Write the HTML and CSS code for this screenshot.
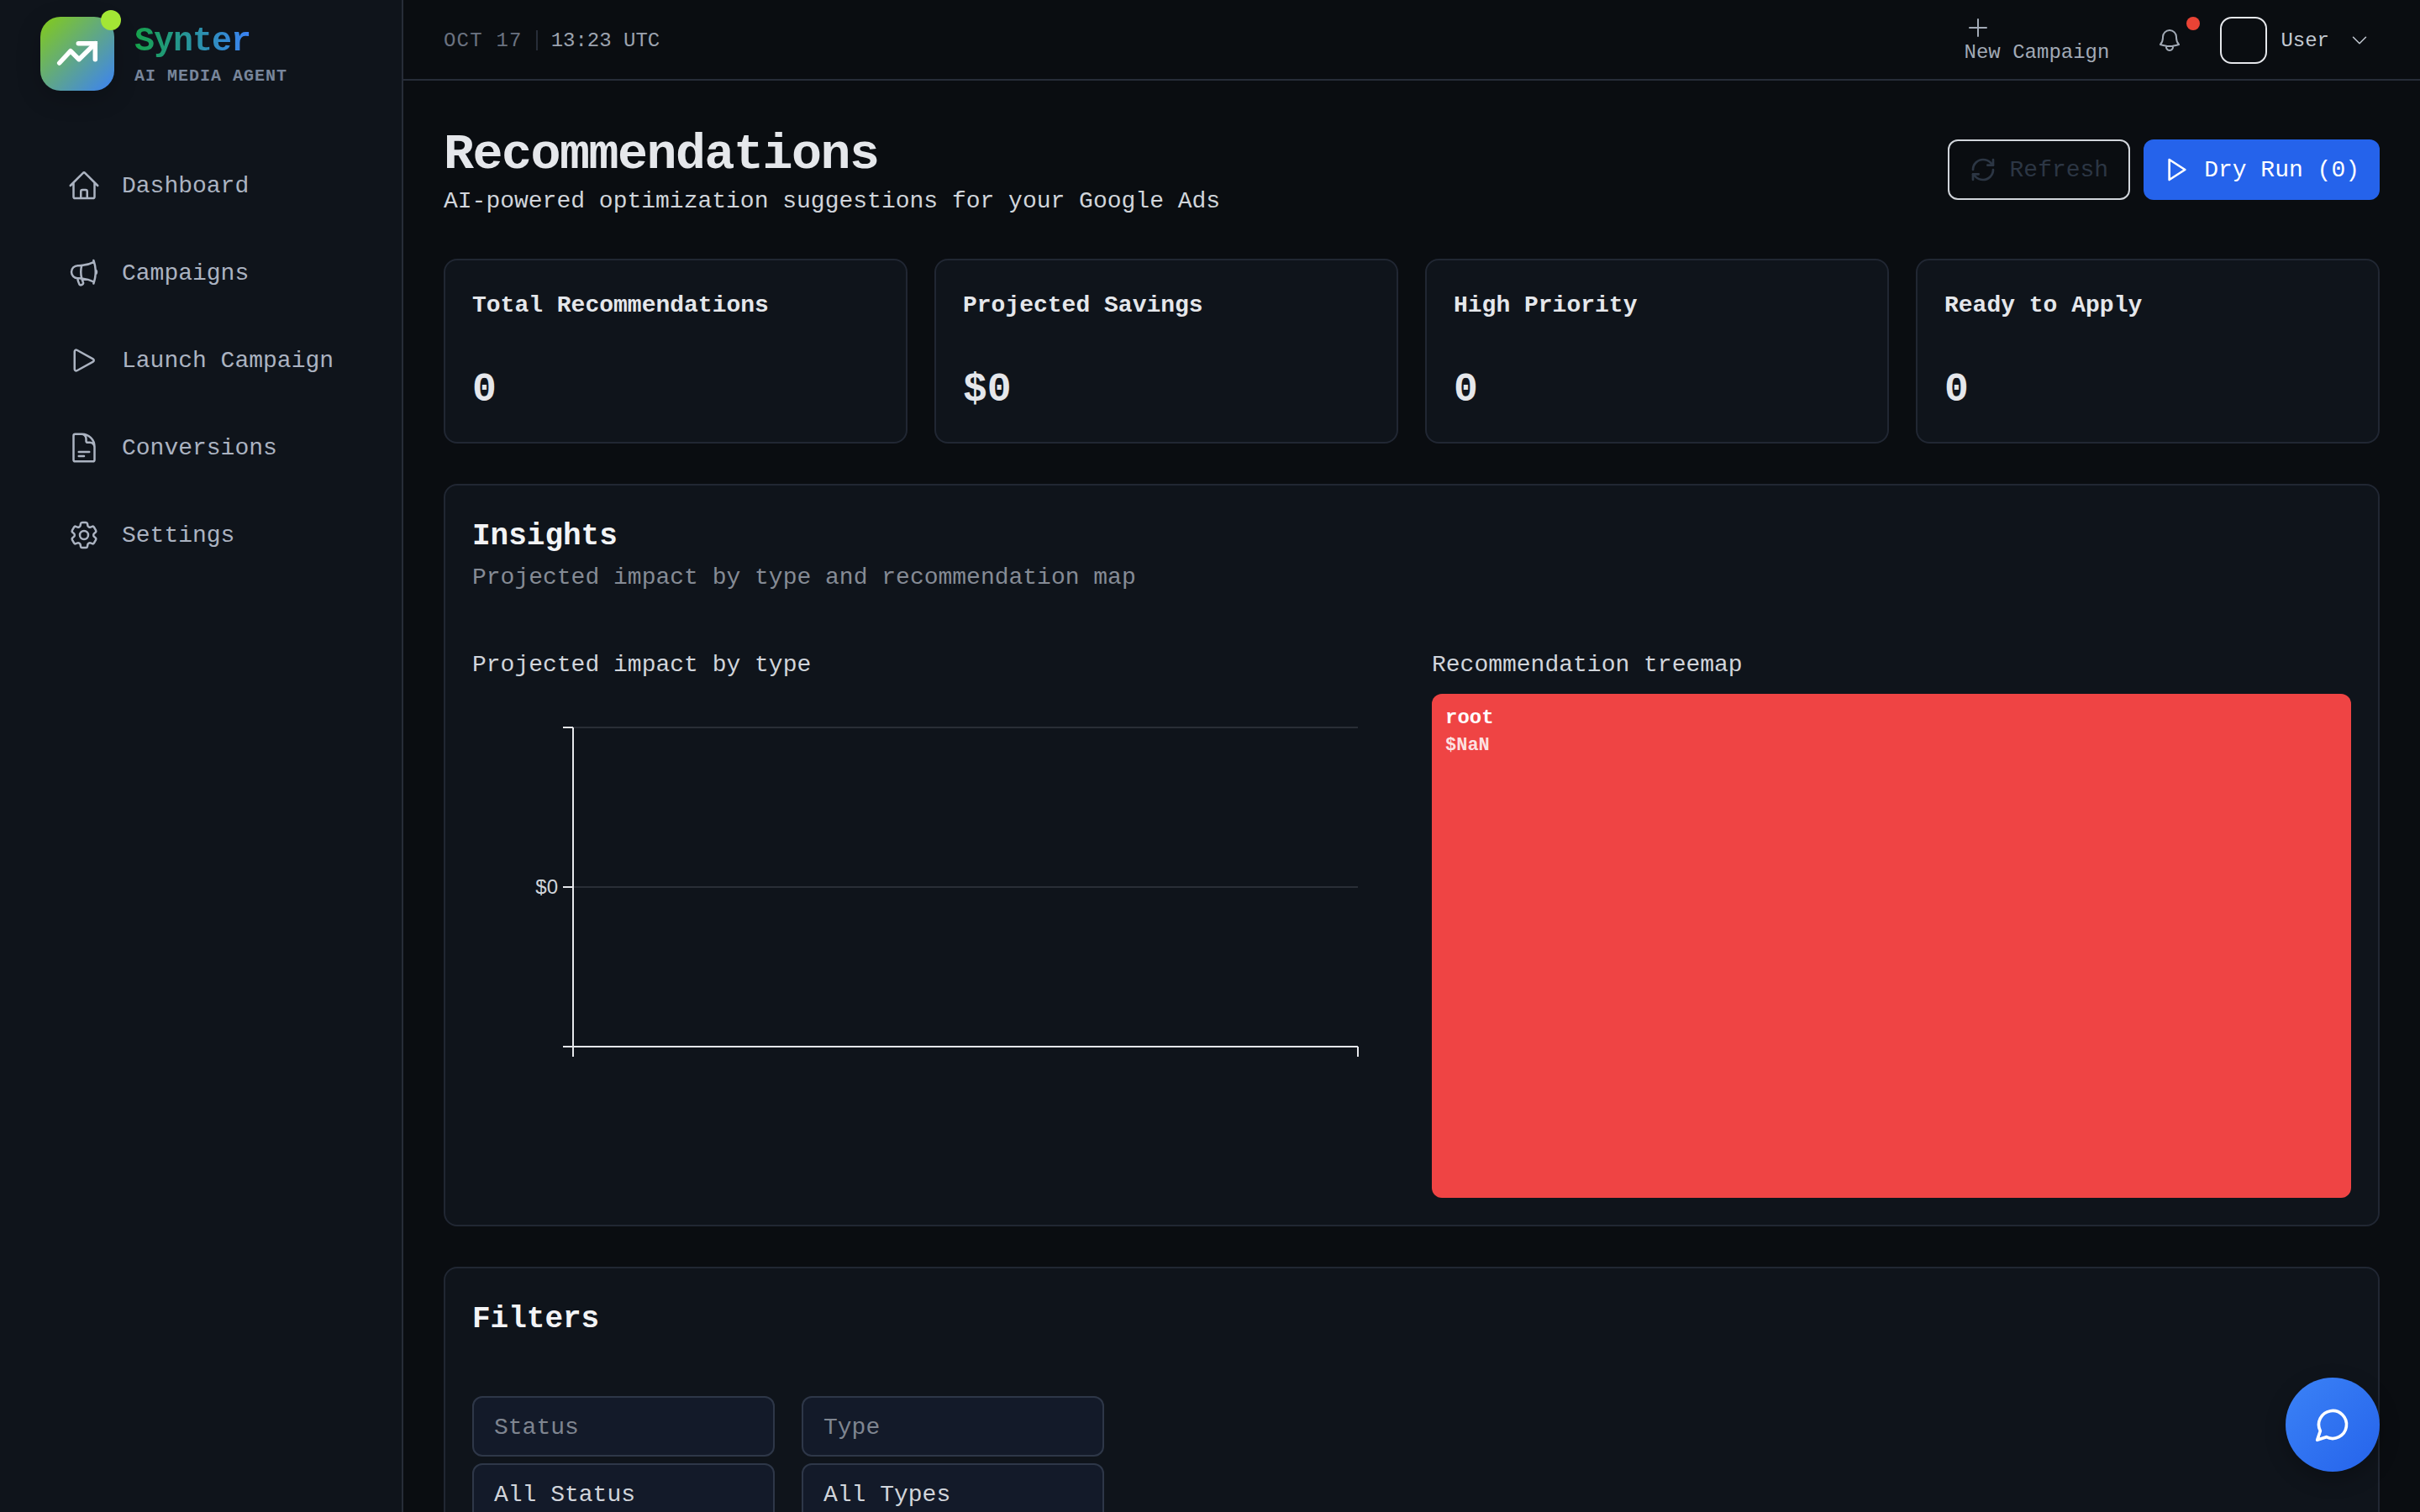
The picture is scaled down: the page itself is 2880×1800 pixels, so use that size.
FILE: index.html
```html
<!DOCTYPE html>
<html lang="en">
<head>
    <meta charset="UTF-8">
    <title>Synter - Recommendations</title>
    <link rel="stylesheet" href="styles.css">
</head>
<body>
    <aside class="sidebar">
        <div class="brand">
            <div class="brand-logo">
                <svg class="brand-arrow" viewBox="0 0 50 50"><path d="M3.7 36 17 21.7l10 10L46.3 12.7"/><path class="brand-arrow-head" d="M26.3 12.7h20v19"/></svg>
                <span class="brand-dot"></span>
            </div>
            <div class="brand-text">
                <div class="brand-name">Synter</div>
                <div class="brand-sub">AI MEDIA AGENT</div>
            </div>
        </div>
        <nav class="nav">
            <a class="nav-item">
                <svg class="nav-icon" viewBox="0 0 24 24"><path d="m2.25 12 8.954-8.955c.44-.439 1.152-.439 1.591 0L21.75 12M4.5 9.75v10.125c0 .621.504 1.125 1.125 1.125H9.75v-4.875c0-.621.504-1.125 1.125-1.125h2.25c.621 0 1.125.504 1.125 1.125V21h4.125c.621 0 1.125-.504 1.125-1.125V9.75M8.25 21h8.25"/></svg>
                Dashboard
            </a>
            <a class="nav-item">
                <svg class="nav-icon" viewBox="0 0 24 24"><path d="M10.34 15.84c-.688-.06-1.386-.09-2.09-.09H7.5a4.5 4.5 0 1 1 0-9h.75c.704 0 1.402-.03 2.09-.09m0 9.18c.253.962.584 1.892.985 2.783.247.55.06 1.21-.463 1.511l-.657.38c-.551.318-1.26.117-1.527-.461a20.845 20.845 0 0 1-1.44-4.282m3.102.069a18.03 18.03 0 0 1-.59-4.59c0-1.586.205-3.124.59-4.59m0 9.18a23.848 23.848 0 0 1 8.835 2.535M10.34 6.66a23.847 23.847 0 0 0 8.835-2.535m0 0A23.74 23.74 0 0 0 18.795 3m.38 1.125a23.91 23.91 0 0 1 1.014 5.395m-1.014 8.855c-.118.38-.245.754-.38 1.125m.38-1.125a23.91 23.91 0 0 0 1.014-5.395m0-3.46c.495.413.811 1.035.811 1.73 0 .695-.316 1.317-.811 1.73m0-3.46a24.347 24.347 0 0 1 0 3.46"/></svg>
                Campaigns
            </a>
            <a class="nav-item">
                <svg class="nav-icon" viewBox="0 0 24 24"><path d="M5.25 5.653c0-.856.917-1.398 1.667-.986l11.54 6.347a1.125 1.125 0 0 1 0 1.972l-11.54 6.347a1.125 1.125 0 0 1-1.667-.986V5.653Z"/></svg>
                Launch Campaign
            </a>
            <a class="nav-item">
                <svg class="nav-icon" viewBox="0 0 24 24"><path d="M19.5 14.25v-2.625a3.375 3.375 0 0 0-3.375-3.375h-1.5A1.125 1.125 0 0 1 13.5 7.125v-1.5a3.375 3.375 0 0 0-3.375-3.375H8.25m0 12.75h7.5m-7.5 3H12M10.5 2.25H5.625c-.621 0-1.125.504-1.125 1.125v17.25c0 .621.504 1.125 1.125 1.125h12.75c.621 0 1.125-.504 1.125-1.125V11.25a9 9 0 0 0-9-9Z"/></svg>
                Conversions
            </a>
            <a class="nav-item">
                <svg class="nav-icon" viewBox="0 0 24 24"><path d="M9.594 3.94c.09-.542.56-.94 1.11-.94h2.593c.55 0 1.02.398 1.11.94l.213 1.281c.063.374.313.686.645.87.074.04.147.083.22.127.325.196.72.257 1.075.124l1.217-.456a1.125 1.125 0 0 1 1.37.49l1.296 2.247a1.125 1.125 0 0 1-.26 1.431l-1.003.827c-.293.241-.438.613-.43.992a7.723 7.723 0 0 1 0 .255c-.008.378.137.75.43.991l1.004.827c.424.35.534.955.26 1.43l-1.298 2.247a1.125 1.125 0 0 1-1.369.491l-1.217-.456c-.355-.133-.75-.072-1.076.124a6.47 6.47 0 0 1-.22.128c-.331.183-.581.495-.644.869l-.213 1.281c-.09.543-.56.94-1.11.94h-2.594c-.55 0-1.019-.398-1.11-.94l-.213-1.281c-.062-.374-.312-.686-.644-.87a6.52 6.52 0 0 1-.22-.127c-.325-.196-.72-.257-1.076-.124l-1.217.456a1.125 1.125 0 0 1-1.369-.49l-1.297-2.247a1.125 1.125 0 0 1 .26-1.431l1.004-.827c.292-.24.437-.613.43-.991a6.932 6.932 0 0 1 0-.255c.007-.38-.138-.751-.43-.992l-1.004-.827a1.125 1.125 0 0 1-.26-1.43l1.297-2.247a1.125 1.125 0 0 1 1.37-.491l1.216.456c.356.133.751.072 1.076-.124.072-.044.146-.086.22-.128.332-.183.582-.495.644-.869l.214-1.28Z"/><path d="M15 12a3 3 0 1 1-6 0 3 3 0 0 1 6 0Z"/></svg>
                Settings
            </a>
        </nav>
    </aside>

    <div class="main">
        <header class="topbar">
            <div class="clock">
                <span class="clock-date">OCT 17</span>
                <span class="clock-sep"></span>
                <span class="clock-time">13:23 UTC</span>
            </div>
            <div class="topbar-right">
                <button class="new-campaign">
                    <svg class="plus-icon" viewBox="0 0 24 24"><path d="M12 4.5v15m7.5-7.5h-15"/></svg>
                    New Campaign
                </button>
                <div class="bell">
                    <svg class="bell-icon" viewBox="0 0 24 24"><path d="M14.857 17.082a23.848 23.848 0 0 0 5.454-1.31A8.967 8.967 0 0 1 18 9.75V9A6 6 0 0 0 6 9v.75a8.967 8.967 0 0 1-2.312 6.022c1.733.64 3.56 1.085 5.455 1.31m5.714 0a24.255 24.255 0 0 1-5.714 0m5.714 0a3 3 0 1 1-5.714 0"/></svg>
                    <span class="bell-dot"></span>
                </div>
                <div class="user">
                    <span class="avatar"></span>
                    <span class="user-name">User</span>
                    <svg class="chevron" viewBox="0 0 24 24"><path d="m19.5 8.25-7.5 7.5-7.5-7.5"/></svg>
                </div>
            </div>
        </header>

        <main class="content">
            <div class="page-head">
                <div>
                    <h1 class="page-title">Recommendations</h1>
                    <p class="page-sub">AI-powered optimization suggestions for your Google Ads</p>
                </div>
                <div class="page-actions">
                    <button class="btn btn-outline">
                        <svg class="btn-icon" viewBox="0 0 24 24"><path d="M3 12a9 9 0 0 1 9-9 9.75 9.75 0 0 1 6.74 2.74L21 8"/><path d="M21 3v5h-5"/><path d="M21 12a9 9 0 0 1-9 9 9.75 9.75 0 0 1-6.74-2.74L3 16"/><path d="M8 16H3v5"/></svg>
                        Refresh
                    </button>
                    <button class="btn btn-primary">
                        <svg class="btn-icon" viewBox="0 0 24 24"><path d="M5 3l14 9-14 9V3z"/></svg>
                        Dry Run (0)
                    </button>
                </div>
            </div>

            <section class="stats">
                <div class="card stat">
                    <div class="stat-label">Total Recommendations</div>
                    <div class="stat-value">0</div>
                </div>
                <div class="card stat">
                    <div class="stat-label">Projected Savings</div>
                    <div class="stat-value">$0</div>
                </div>
                <div class="card stat">
                    <div class="stat-label">High Priority</div>
                    <div class="stat-value">0</div>
                </div>
                <div class="card stat">
                    <div class="stat-label">Ready to Apply</div>
                    <div class="stat-value">0</div>
                </div>
            </section>

            <section class="card panel">
                <h2 class="panel-title">Insights</h2>
                <p class="panel-sub">Projected impact by type and recommendation map</p>
                <div class="insights">
                    <div>
                        <h3 class="chart-title">Projected impact by type</h3>
                        <svg class="chart" viewBox="0 0 1094 600" width="1094" height="600">
                            <g class="grid-line">
                                <line x1="120" y1="40" x2="1054" y2="40"/>
                                <line x1="120" y1="230" x2="1054" y2="230"/>
                            </g>
                            <g class="axis-line">
                                <line x1="120" y1="40" x2="120" y2="432"/>
                                <line x1="108" y1="420" x2="1054" y2="420"/>
                                <line x1="108" y1="40" x2="120" y2="40"/>
                                <line x1="108" y1="230" x2="120" y2="230"/>
                                <line x1="1054" y1="420" x2="1054" y2="432"/>
                            </g>
                            <text class="axis-label" x="102" y="238" text-anchor="end">$0</text>
                        </svg>
                    </div>
                    <div>
                        <h3 class="chart-title">Recommendation treemap</h3>
                        <div class="treemap">
                            <div class="treemap-name">root</div>
                            <div class="treemap-value">$NaN</div>
                        </div>
                    </div>
                </div>
            </section>

            <section class="card panel">
                <h2 class="panel-title filters-title">Filters</h2>
                <div class="filters">
                    <div class="filter-col">
                        <div class="field field-hint">Status</div>
                        <div class="field">All Status</div>
                    </div>
                    <div class="filter-col">
                        <div class="field field-hint">Type</div>
                        <div class="field">All Types</div>
                    </div>
                </div>
            </section>
        </main>
    </div>

    <button class="chat-fab">
        <svg class="chat-icon" viewBox="0 0 24 24"><path d="M7.9 20A9 9 0 1 0 4 16.1L2 22Z"/></svg>
    </button>
</body>
</html>
```

FILE: styles.css
```css
* {
    box-sizing: border-box;
}

body {
    margin: 0;
    height: 100vh;
    overflow: hidden;
    display: flex;
    background: #0a0d11;
    color: #e5e7eb;
    font-family: "Liberation Mono", "DejaVu Sans Mono", monospace;
    font-size: 28px;
}

svg {
    fill: none;
    stroke: currentColor;
    stroke-linecap: round;
    stroke-linejoin: round;
    stroke-width: 1.5;
    flex-shrink: 0;
}

button {
    font: inherit;
    background: none;
    border: none;
    padding: 0;
}

h1, h2, h3, p {
    margin: 0;
}

/* sidebar */
.sidebar {
    width: 480px;
    height: 100vh;
    flex-shrink: 0;
    background: #0f141b;
    border-right: 2px solid #272d38;
}

.brand {
    display: flex;
    align-items: center;
    gap: 24px;
    padding: 20px 48px 0;
}

.brand-logo {
    position: relative;
    width: 88px;
    height: 88px;
    display: flex;
    align-items: center;
    justify-content: center;
    border-radius: 24px;
    background: linear-gradient(135deg, #84cc16, #3b82f6);
    box-shadow: 0 8px 30px rgba(0, 0, 0, .2);
    color: #fff;
}

.brand-arrow {
    width: 50px;
    height: 50px;
    stroke-width: 5.5;
}

.brand-arrow-head {
    stroke-linejoin: miter;
}

.brand-dot {
    position: absolute;
    top: -8px;
    right: -8px;
    width: 24px;
    height: 24px;
    border-radius: 50%;
    background: #a3e635;
}

.brand-text {
    padding-top: 4px;
}

.brand-name {
    font-size: 40px;
    line-height: 46px;
    font-weight: 700;
    letter-spacing: -1px;
    background: linear-gradient(90deg, #16a34a, #3b82f6);
    background-size: 138px 100%;
    background-repeat: no-repeat;
    -webkit-background-clip: text;
    background-clip: text;
    color: transparent;
}

.brand-sub {
    margin-top: 4px;
    font-size: 20px;
    line-height: 28px;
    font-weight: 700;
    letter-spacing: 1px;
    color: #78869b;
}

.nav {
    display: flex;
    flex-direction: column;
    gap: 16px;
    margin-top: 69px;
    padding: 0 48px;
}

.nav-item {
    display: flex;
    align-items: center;
    gap: 25px;
    height: 88px;
    padding: 0 32px;
    color: #abb3c1;
}

.nav-icon {
    width: 40px;
    height: 40px;
}

/* top bar */
.main {
    flex: 1;
    min-width: 0;
}

.topbar {
    display: flex;
    align-items: center;
    justify-content: space-between;
    height: 96px;
    padding: 2px 60px 0 48px;
    border-bottom: 2px solid #272d38;
    font-size: 24px;
}

.clock {
    display: flex;
    align-items: center;
    gap: 16px;
}

.clock-date {
    letter-spacing: 1.2px;
    color: #6b7280;
}

.clock-sep {
    width: 2px;
    height: 24px;
    background: #272d38;
}

.clock-time {
    color: #9ca3af;
}

.topbar-right {
    display: flex;
    align-items: center;
}

.new-campaign {
    display: flex;
    flex-direction: column;
    align-items: flex-start;
    margin-top: -2px;
    color: #a2aab6;
    line-height: 28px;
}

.plus-icon {
    width: 32px;
    height: 32px;
}

.bell {
    position: relative;
    display: flex;
    margin-left: 56px;
    color: #a2aab6;
}

.bell-icon {
    width: 32px;
    height: 32px;
}

.bell-dot {
    position: absolute;
    top: -12px;
    right: -20px;
    width: 16px;
    height: 16px;
    border-radius: 50%;
    background: #ea4335;
}

.user {
    display: flex;
    align-items: center;
    margin-left: 44px;
    color: #c3c9d2;
}

.avatar {
    width: 56px;
    height: 56px;
    border: 2px solid #e5e7eb;
    border-radius: 14px;
}

.user-name {
    margin-left: 16px;
}

.chevron {
    width: 24px;
    height: 24px;
    margin-left: 24px;
}

/* page */
.content {
    padding: 48px;
}

.page-head {
    display: flex;
    align-items: center;
    justify-content: space-between;
}

.page-title {
    padding-top: 4px;
    font-size: 60px;
    line-height: 72px;
    font-weight: 600;
    letter-spacing: -1.5px;
    color: #e5e7eb;
}

.page-sub {
    line-height: 40px;
    color: #d1d5db;
}

.page-actions {
    display: flex;
    gap: 16px;
}

.btn {
    display: flex;
    align-items: center;
    gap: 16px;
    height: 72px;
    padding: 0 24px;
    border-radius: 12px;
}

.btn-outline {
    border: 2px solid #d1d5db;
    color: #2c3644;
}

.btn-primary {
    background: #2563eb;
    color: #fff;
}

.btn-icon {
    width: 32px;
    height: 32px;
    stroke-width: 2;
}

.card {
    background: #0f141b;
    border: 2px solid #212733;
    border-radius: 16px;
}

.stats {
    display: grid;
    grid-template-columns: repeat(4, 1fr);
    gap: 32px;
    margin-top: 48px;
}

.stat {
    height: 220px;
    padding: 32px;
}

.stat-label {
    font-weight: 600;
    line-height: 44px;
    color: #e5e7eb;
}

.stat-value {
    margin-top: 50px;
    font-size: 48px;
    line-height: 56px;
    font-weight: 600;
    color: #e5e7eb;
}

.panel {
    margin-top: 48px;
    padding: 32px;
}

.panel-title {
    font-size: 36px;
    line-height: 58px;
    font-weight: 600;
    color: #f3f4f6;
}

.panel-sub {
    line-height: 40px;
    color: #858b95;
}

.insights {
    display: grid;
    grid-template-columns: 1fr 1fr;
    gap: 48px;
    margin-top: 64px;
}

.chart-title {
    font-size: 28px;
    line-height: 40px;
    font-weight: 400;
    color: #d1d5db;
    margin-bottom: 14px;
}

.chart {
    display: block;
    stroke-linecap: butt;
}

.grid-line {
    stroke: #292e36;
    stroke-width: 2;
}

.axis-line {
    stroke: #e5e7eb;
    stroke-width: 2;
}

.axis-label {
    font-family: "Liberation Sans", sans-serif;
    font-size: 24px;
    fill: #d1d5db;
    stroke: none;
}

.treemap {
    height: 600px;
    padding: 12px 16px;
    border-radius: 12px;
    background: #ef4444;
}

.treemap-name {
    font-size: 24px;
    line-height: 34px;
    font-weight: 700;
    color: #fff;
}

.treemap-value {
    font-size: 22px;
    line-height: 32px;
    font-weight: 700;
    color: rgba(255, 255, 255, .85);
}

.panel-title.filters-title {
    line-height: 58px;
    margin-bottom: 62px;
}

.filters {
    display: flex;
    gap: 32px;
}

.filter-col {
    display: flex;
    flex-direction: column;
    gap: 8px;
    width: 360px;
}

.field {
    flex-shrink: 0;
    height: 72px;
    padding: 2px 24px 0;
    display: flex;
    align-items: center;
    background: #131a29;
    border: 2px solid #2e3748;
    border-radius: 12px;
    color: #d1d5db;
}

.field-hint {
    color: #7f8590;
}

.chat-fab {
    position: fixed;
    right: 48px;
    bottom: 48px;
    width: 112px;
    height: 112px;
    display: flex;
    align-items: center;
    justify-content: center;
    border-radius: 50%;
    background: linear-gradient(135deg, #3b82f6, #2563eb);
    box-shadow: 0 8px 24px rgba(0, 0, 0, .25);
    color: #fff;
}

.chat-icon {
    width: 44px;
    height: 44px;
    stroke-width: 2;
}
```
